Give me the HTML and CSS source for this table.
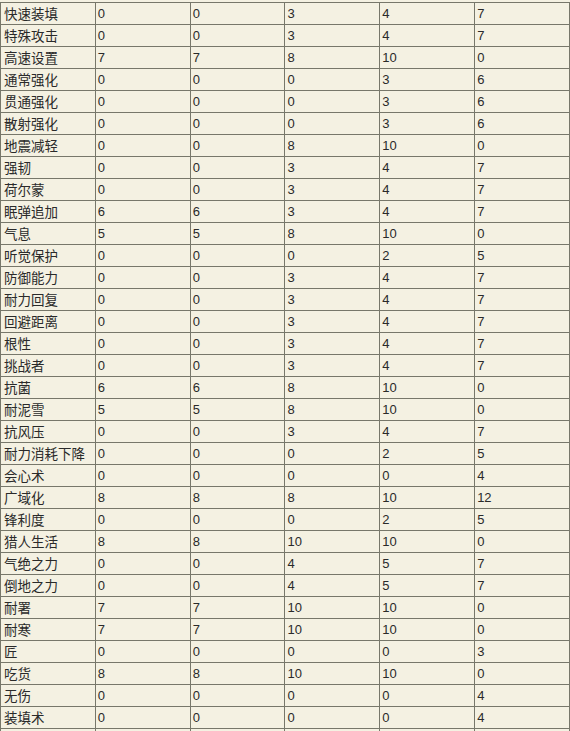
FILE: index.html
```html
<!DOCTYPE html>
<html lang="zh-CN">
<head>
<meta charset="utf-8">
<title>技能表</title>
<link rel="stylesheet" href="styles.css">
</head>
<body>
<table class="skills">
<tbody>
<tr><td class="name">快速装填</td><td>0</td><td>0</td><td>3</td><td>4</td><td>7</td></tr>
<tr><td class="name">特殊攻击</td><td>0</td><td>0</td><td>3</td><td>4</td><td>7</td></tr>
<tr><td class="name">高速设置</td><td>7</td><td>7</td><td>8</td><td>10</td><td>0</td></tr>
<tr><td class="name">通常强化</td><td>0</td><td>0</td><td>0</td><td>3</td><td>6</td></tr>
<tr><td class="name">贯通强化</td><td>0</td><td>0</td><td>0</td><td>3</td><td>6</td></tr>
<tr><td class="name">散射强化</td><td>0</td><td>0</td><td>0</td><td>3</td><td>6</td></tr>
<tr><td class="name">地震减轻</td><td>0</td><td>0</td><td>8</td><td>10</td><td>0</td></tr>
<tr><td class="name">强韧</td><td>0</td><td>0</td><td>3</td><td>4</td><td>7</td></tr>
<tr><td class="name">荷尔蒙</td><td>0</td><td>0</td><td>3</td><td>4</td><td>7</td></tr>
<tr><td class="name">眠弹追加</td><td>6</td><td>6</td><td>3</td><td>4</td><td>7</td></tr>
<tr><td class="name">气息</td><td>5</td><td>5</td><td>8</td><td>10</td><td>0</td></tr>
<tr><td class="name">听觉保护</td><td>0</td><td>0</td><td>0</td><td>2</td><td>5</td></tr>
<tr><td class="name">防御能力</td><td>0</td><td>0</td><td>3</td><td>4</td><td>7</td></tr>
<tr><td class="name">耐力回复</td><td>0</td><td>0</td><td>3</td><td>4</td><td>7</td></tr>
<tr><td class="name">回避距离</td><td>0</td><td>0</td><td>3</td><td>4</td><td>7</td></tr>
<tr><td class="name">根性</td><td>0</td><td>0</td><td>3</td><td>4</td><td>7</td></tr>
<tr><td class="name">挑战者</td><td>0</td><td>0</td><td>3</td><td>4</td><td>7</td></tr>
<tr><td class="name">抗菌</td><td>6</td><td>6</td><td>8</td><td>10</td><td>0</td></tr>
<tr><td class="name">耐泥雪</td><td>5</td><td>5</td><td>8</td><td>10</td><td>0</td></tr>
<tr><td class="name">抗风压</td><td>0</td><td>0</td><td>3</td><td>4</td><td>7</td></tr>
<tr><td class="name">耐力消耗下降</td><td>0</td><td>0</td><td>0</td><td>2</td><td>5</td></tr>
<tr><td class="name">会心术</td><td>0</td><td>0</td><td>0</td><td>0</td><td>4</td></tr>
<tr><td class="name">广域化</td><td>8</td><td>8</td><td>8</td><td>10</td><td>12</td></tr>
<tr><td class="name">锋利度</td><td>0</td><td>0</td><td>0</td><td>2</td><td>5</td></tr>
<tr><td class="name">猎人生活</td><td>8</td><td>8</td><td>10</td><td>10</td><td>0</td></tr>
<tr><td class="name">气绝之力</td><td>0</td><td>0</td><td>4</td><td>5</td><td>7</td></tr>
<tr><td class="name">倒地之力</td><td>0</td><td>0</td><td>4</td><td>5</td><td>7</td></tr>
<tr><td class="name">耐署</td><td>7</td><td>7</td><td>10</td><td>10</td><td>0</td></tr>
<tr><td class="name">耐寒</td><td>7</td><td>7</td><td>10</td><td>10</td><td>0</td></tr>
<tr><td class="name">匠</td><td>0</td><td>0</td><td>0</td><td>0</td><td>3</td></tr>
<tr><td class="name">吃货</td><td>8</td><td>8</td><td>10</td><td>10</td><td>0</td></tr>
<tr><td class="name">无伤</td><td>0</td><td>0</td><td>0</td><td>0</td><td>4</td></tr>
<tr><td class="name">装填术</td><td>0</td><td>0</td><td>0</td><td>0</td><td>4</td></tr>
<tr><td class="name">&nbsp;</td><td>&nbsp;</td><td>&nbsp;</td><td>&nbsp;</td><td>&nbsp;</td><td>&nbsp;</td></tr>
</tbody>
</table>
</body>
</html>
```

FILE: styles.css
```css
html, body {
  margin: 0;
  padding: 0;
  background: #f4f1e2;
}

body {
  padding-top: 2px;
  overflow: hidden;
}

.skills {
  width: 570px;
  table-layout: fixed;
  border-collapse: collapse;
  background: #f4f1e2;
  color: #2a2a2a;
  font-family: "Liberation Sans", Arial, sans-serif;
  font-size: 13px;
}

.skills td {
  border: 1px solid #77776a;
  height: 21px;
  padding: 0 0 0 2px;
  line-height: 21px;
  vertical-align: middle;
  white-space: nowrap;
  overflow: hidden;
}

.skills td.name {
  padding-left: 3px;
  font-family: "Noto Sans CJK SC", "Noto Sans", sans-serif;
  font-size: 13.5px;
}
```
